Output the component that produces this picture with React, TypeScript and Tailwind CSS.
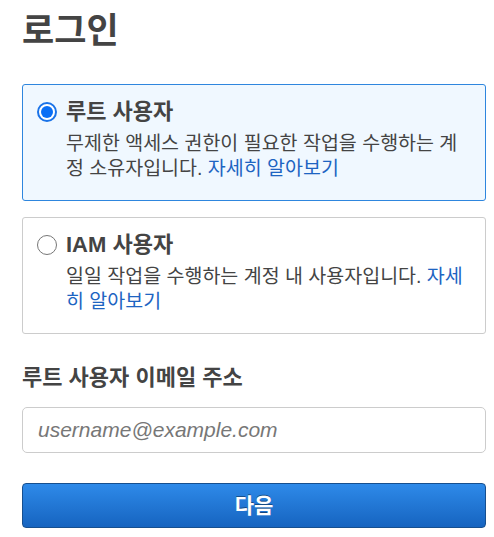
import React from "react";

const font = { fontFamily: '"Liberation Sans", "Noto Sans CJK KR", sans-serif' };

function Radio({ checked }: { checked: boolean }) {
  return checked ? (
    <span className="mt-[3px] flex h-[20px] w-[20px] shrink-0 items-center justify-center rounded-full border-2 border-[#1a73e8] bg-white">
      <span className="h-[12px] w-[12px] rounded-full bg-[#0a6ff5]" />
    </span>
  ) : (
    <span className="mt-[3px] h-[20px] w-[20px] shrink-0 rounded-full border-[1.5px] border-[#777] bg-white" />
  );
}

function Option({
  checked,
  title,
  desc,
}: {
  checked: boolean;
  title: string;
  desc: string;
}) {
  return (
    <div
      className={
        checked
          ? "rounded-[3px] border border-[#2e86de] bg-[#f0f8ff] px-[14px] pt-[14px] pb-[19px]"
          : "rounded-[3px] border border-[#cccccc] bg-white px-[14px] pt-[14px] pb-[19px]"
      }
    >
      <div className="flex gap-[9px]">
        <Radio checked={checked} />
        <div>
          <div className="text-[22px] font-bold leading-[26px]">{title}</div>
          <p className="mt-[6px] text-[19.5px] leading-[25px]">
            {desc} <a className="text-[#1d64c2]">자세히 알아보기</a>
          </p>
        </div>
      </div>
    </div>
  );
}

export default function App() {
  return (
    <div style={font} className="w-[494px] h-[537px] bg-white pl-[22px] pr-[8px] pt-[11px] text-[#444]">
      <h1 className="text-[35px] font-bold leading-[40px]">로그인</h1>
      <div className="mt-[33px] flex flex-col gap-[16px]">
        <Option
          checked
          title="루트 사용자"
          desc="무제한 액세스 권한이 필요한 작업을 수행하는 계정 소유자입니다."
        />
        <Option
          checked={false}
          title="IAM 사용자"
          desc="일일 작업을 수행하는 계정 내 사용자입니다."
        />
      </div>
      <label className="mt-[31px] block text-[22px] font-bold leading-[26px]">루트 사용자 이메일 주소</label>
      <input
        style={font}
        placeholder="username@example.com"
        className="mt-[16px] block h-[46px] w-full rounded-[5px] border border-[#cccccc] px-[15px] text-[21px] placeholder:italic placeholder:text-[#777]"
      />
      <button
        style={font}
        className="mt-[30px] block h-[45px] w-full rounded-[4px] border border-[#164f8f] bg-gradient-to-b from-[#2e8ae9] to-[#1664c0] text-[21px] font-bold text-white [text-shadow:0_-1px_0_rgba(0,0,0,0.4)]"
      >
        다음
      </button>
    </div>
  );
}
